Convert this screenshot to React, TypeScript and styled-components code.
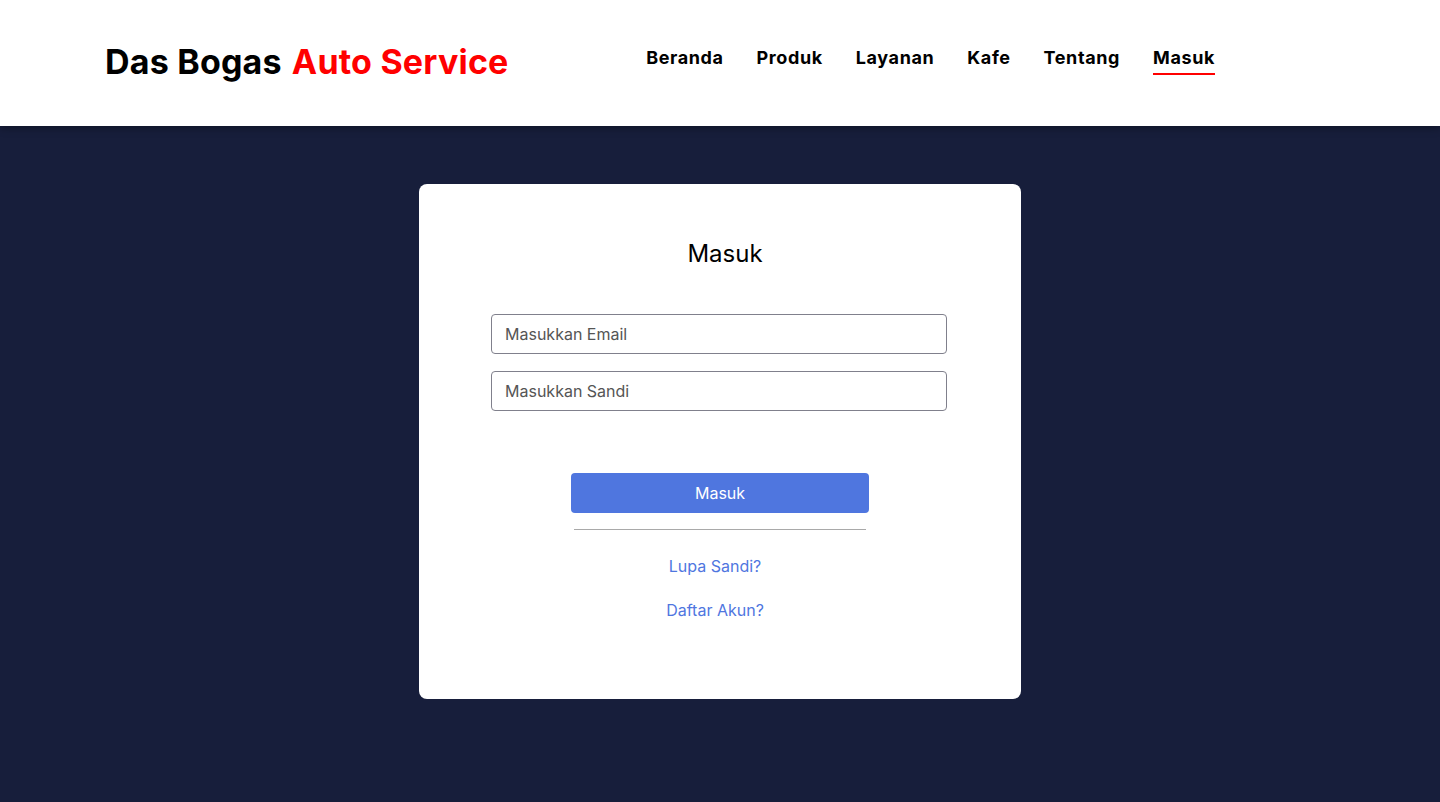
import React from "react";
import styled, { createGlobalStyle } from "styled-components";

const GlobalStyle = createGlobalStyle`
  html, body { margin: 0; padding: 0; }
  body {
    font-family: "Inter", "Open Sans", sans-serif;
    background: #171e3b;
    min-height: 802px;
  }
  * { box-sizing: border-box; }
`;

const Page = styled.div`
  min-height: 802px;
  background: #171e3b;
  display: flex;
  flex-direction: column;
`;

const Header = styled.header`
  height: 126px;
  background: #ffffff;
  display: flex;
  align-items: center;
  padding: 0 225px 0 105px;
  box-shadow: 0 2px 8px rgba(0, 0, 0, 0.35);
  position: relative;
  z-index: 1;
`;

const Logo = styled.div`
  font-size: 34px;
  font-weight: 700;
  letter-spacing: 0.2px;
  color: #000;
  display: flex;
  gap: 10px;
  margin-top: -3px;
`;

const LogoAccent = styled.span`
  color: #ff0000;
`;

const Nav = styled.nav`
  margin-left: auto;
  display: flex;
  align-items: center;
  gap: 33px;
  margin-top: -10px;
`;

const NavLink = styled.a<{ $active?: boolean }>`
  font-size: 18px;
  font-weight: 700;
  letter-spacing: 0.6px;
  color: #000;
  text-decoration: none;
  padding-bottom: 4px;
  border-bottom: 2px solid ${(p) => (p.$active ? "#ff0000" : "transparent")};
  margin-bottom: -6px;
  line-height: 22px;
`;

const Main = styled.main`
  flex: 1;
  display: flex;
  justify-content: center;
  padding-top: 58px;
`;

const Card = styled.div`
  width: 602px;
  height: 515px;
  background: #fff;
  border-radius: 8px;
  padding: 55px 74px 0 72px;
  display: flex;
  flex-direction: column;
  align-items: center;
`;

const Title = styled.h1`
  margin: 0 0 46px 12px;
  font-size: 24px;
  font-weight: 400;
  line-height: 29px;
  color: #000;
`;

const Input = styled.input`
  width: 456px;
  height: 40px;
  border: 1px solid #80808c;
  border-radius: 4px;
  padding: 0 13px;
  font-family: inherit;
  font-size: 16px;
  color: #333;
  outline: none;
  margin-bottom: 17px;
  &::placeholder {
    color: #555;
  }
`;

const Button = styled.button`
  margin: 45px 0 0 2px;
  width: 298px;
  height: 40px;
  background: #4f76df;
  border: none;
  border-radius: 4px;
  color: #fff;
  font-family: inherit;
  font-size: 16px;
  font-weight: 400;
`;

const Divider = styled.hr`
  width: 292px;
  margin: 16px 0 24px 2px;
  border: none;
  border-top: 1px solid #a9a9a9;
`;

const LinkText = styled.a`
  font-size: 16px;
  line-height: 24px;
  color: #4f76df;
  text-decoration: none;
  margin-left: -8px;
  & + & {
    margin-top: 20px;
  }
`;

export default function App() {
  return (
    <>
      <GlobalStyle />
      <Page>
        <Header>
          <Logo>
            <span>Das Bogas</span>
            <LogoAccent>Auto Service</LogoAccent>
          </Logo>
          <Nav>
            <NavLink href="#">Beranda</NavLink>
            <NavLink href="#">Produk</NavLink>
            <NavLink href="#">Layanan</NavLink>
            <NavLink href="#">Kafe</NavLink>
            <NavLink href="#">Tentang</NavLink>
            <NavLink href="#" $active>
              Masuk
            </NavLink>
          </Nav>
        </Header>
        <Main>
          <Card>
            <Title>Masuk</Title>
            <Input type="email" placeholder="Masukkan Email" />
            <Input type="password" placeholder="Masukkan Sandi" />
            <Button>Masuk</Button>
            <Divider />
            <LinkText href="#">Lupa Sandi?</LinkText>
            <LinkText href="#">Daftar Akun?</LinkText>
          </Card>
        </Main>
      </Page>
    </>
  );
}
